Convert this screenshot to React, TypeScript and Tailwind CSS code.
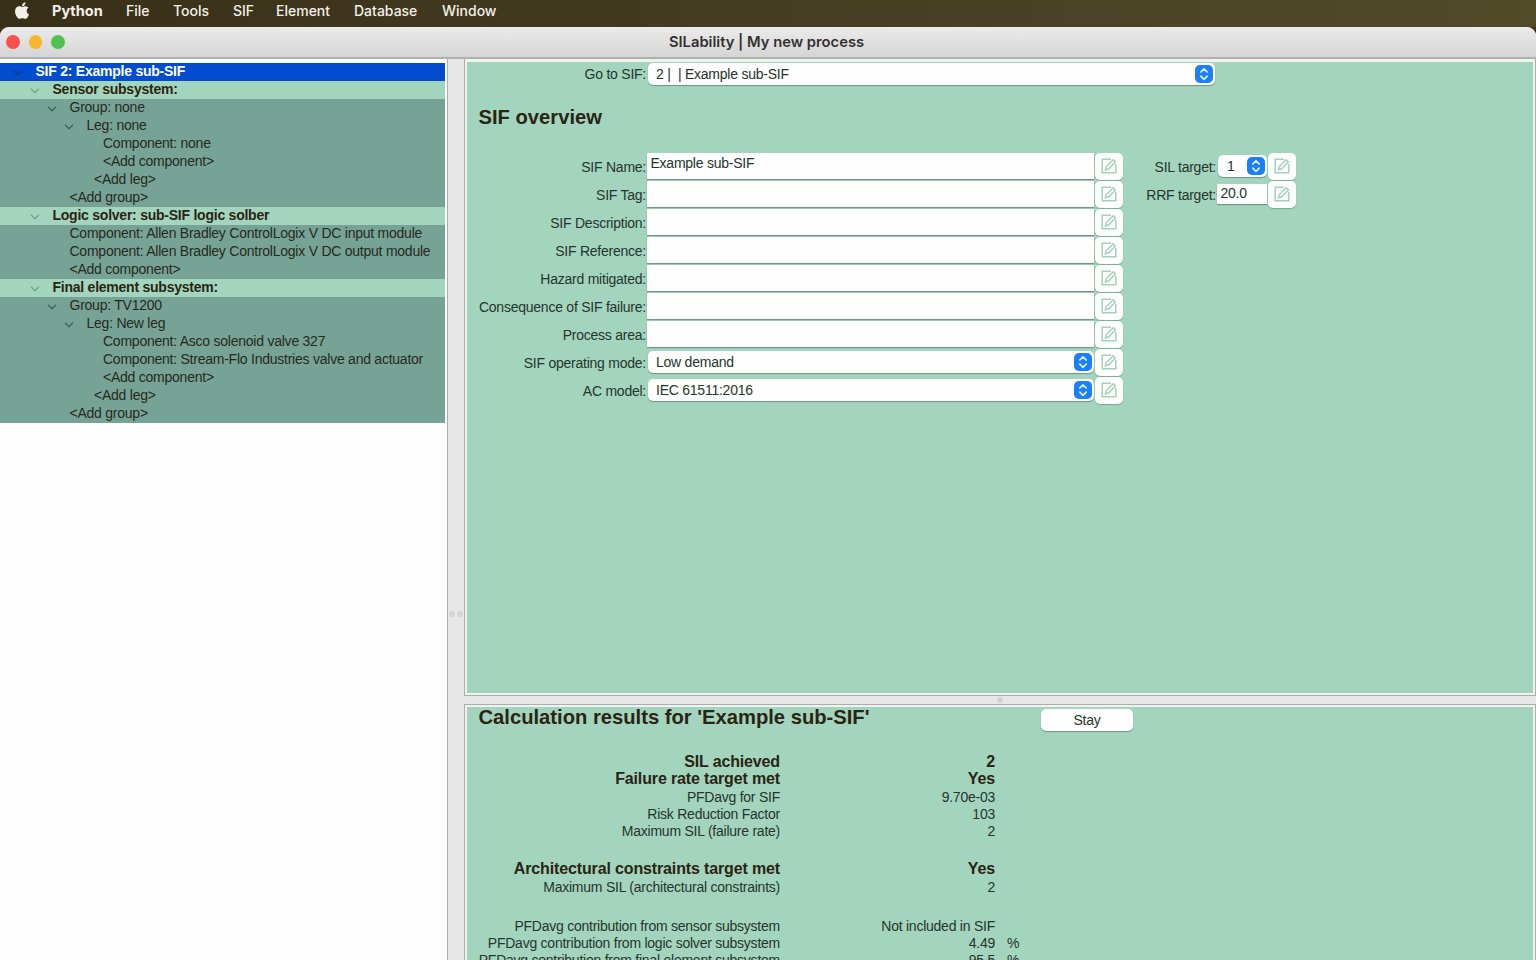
import { FaApple } from "react-icons/fa";

const menus = [
  { label: "File", width: "w-[47px]" },
  { label: "Tools", width: "w-[60px]" },
  { label: "SIF", width: "w-[43px]" },
  { label: "Element", width: "w-[78px]" },
  { label: "Database", width: "w-[88px]" },
  { label: "Window", width: "w-[60px]" },
];

interface TreeRow {
  text: string;
  indent: string;
  kind?: "root" | "section";
  open?: boolean;
}

const tree: TreeRow[] = [
  { text: "SIF 2: Example sub-SIF", indent: "pl-[35.5px]", kind: "root", open: true },
  { text: "Sensor subsystem:", indent: "pl-[52.5px]", kind: "section", open: true },
  { text: "Group: none", indent: "pl-[69.5px]", open: true },
  { text: "Leg: none", indent: "pl-[86.5px]", open: true },
  { text: "Component: none", indent: "pl-[103px]" },
  { text: "<Add component>", indent: "pl-[103px]" },
  { text: "<Add leg>", indent: "pl-[94px]" },
  { text: "<Add group>", indent: "pl-[69.5px]" },
  { text: "Logic solver: sub-SIF logic solber", indent: "pl-[52.5px]", kind: "section", open: true },
  { text: "Component: Allen Bradley ControlLogix V DC input module", indent: "pl-[69.5px]" },
  { text: "Component: Allen Bradley ControlLogix V DC output module", indent: "pl-[69.5px]" },
  { text: "<Add component>", indent: "pl-[69.5px]" },
  { text: "Final element subsystem:", indent: "pl-[52.5px]", kind: "section", open: true },
  { text: "Group: TV1200", indent: "pl-[69.5px]", open: true },
  { text: "Leg: New leg", indent: "pl-[86.5px]", open: true },
  { text: "Component: Asco solenoid valve 327", indent: "pl-[103px]" },
  { text: "Component: Stream-Flo Industries valve and actuator", indent: "pl-[103px]" },
  { text: "<Add component>", indent: "pl-[103px]" },
  { text: "<Add leg>", indent: "pl-[94px]" },
  { text: "<Add group>", indent: "pl-[69.5px]" },
];

const fields = [
  { label: "SIF Name:", value: "Example sub-SIF" },
  { label: "SIF Tag:", value: "" },
  { label: "SIF Description:", value: "" },
  { label: "SIF Reference:", value: "" },
  { label: "Hazard mitigated:", value: "" },
  { label: "Consequence of SIF failure:", value: "" },
  { label: "Process area:", value: "" },
  { label: "SIF operating mode:", value: "Low demand", select: true },
  { label: "AC model:", value: "IEC 61511:2016", select: true },
];

const results = [
  { label: "SIL achieved", value: "2", bold: true },
  { label: "Failure rate target met", value: "Yes", bold: true, gap: "mb-[2px]" },
  { label: "PFDavg for SIF", value: "9.70e-03" },
  { label: "Risk Reduction Factor", value: "103" },
  { label: "Maximum SIL (failure rate)", value: "2", gap: "mb-5" },
  { label: "Architectural constraints target met", value: "Yes", bold: true, gap: "mb-[2px]" },
  { label: "Maximum SIL (architectural constraints)", value: "2", gap: "mb-[22px]" },
  { label: "PFDavg contribution from sensor subsystem", value: "Not included in SIF" },
  { label: "PFDavg contribution from logic solver subsystem", value: "4.49", unit: "%" },
  { label: "PFDavg contribution from final element subsystem", value: "95.5", unit: "%" },
];

function Chevron({ className }: { className: string }) {
  return (
    <svg viewBox="0 0 10 6" className={`w-[10px] h-[6px] -ml-[22.5px] mr-[12.5px] mt-[2px] shrink-0 ${className}`} fill="none" stroke="currentColor" strokeWidth="1.4">
      <path d="M1 0.8 L5 4.8 L9 0.8" />
    </svg>
  );
}

function Stepper() {
  return (
    <span className="w-[18px] h-[18px] rounded-[5px] bg-[#1a7ffa] flex items-center justify-center shrink-0">
      <svg viewBox="0 0 18 18" className="w-[18px] h-[18px]" fill="none" stroke="#e6f3f5" strokeWidth="1.7" strokeLinecap="round" strokeLinejoin="round">
        <path d="M5.8 7 L9 3.9 L12.2 7" />
        <path d="M5.8 11.2 L9 14.3 L12.2 11.2" />
      </svg>
    </span>
  );
}

function EditButton() {
  return (
    <button className="w-[28px] h-[27px] rounded-[5px] bg-[#fcfefc] flex items-center justify-center shrink-0 shadow-[0_1px_1px_rgba(60,90,75,0.35)]" aria-label="Edit">
      <svg viewBox="0 0 16 16" className="w-4 h-4" fill="none" stroke="#a6d0bc" strokeWidth="1.5">
        <path d="M10 1.2 H1.2 V14.8 H14.8 V6" />
        <path d="M4.4 11.8 L5.2 8.8 L12.2 1.8 L14.4 4 L7.4 11 Z" />
      </svg>
    </button>
  );
}

function Select({ value, className }: { value: string; className: string }) {
  return (
    <div className={`h-[22px] rounded-[5px] bg-[#fdfefd] flex items-center justify-between pr-[2px] shadow-[0_1px_1px_rgba(60,90,75,0.5)] ${className}`}>
      <span className="leading-4">{value}</span>
      <Stepper />
    </div>
  );
}

export default function App() {
  return (
    <div className="w-[1536px] h-[960px] overflow-hidden flex flex-col bg-[#3c341c] text-[14px] tracking-[-0.24px] text-[#26352c] font-['Liberation_Sans',Arial,sans-serif] whitespace-pre">
      {/* Menu bar */}
      <div className="h-[27px] shrink-0 flex items-start pt-px bg-linear-to-r from-[#382f18] to-[#524b2a] text-[#f3f1e9] font-['Inter',sans-serif] font-medium text-[14px] leading-5 tracking-normal">
        <FaApple className="w-[18px] h-[19px] ml-[13px] mr-[21px]" />
        <span className="w-[74px] font-bold text-[14.5px]">Python</span>
        {menus.map((m) => (
          <span key={m.label} className={m.width}>{m.label}</span>
        ))}
      </div>

      <div className="flex-1 min-h-0 flex flex-col rounded-t-[9px] overflow-hidden bg-[#e6e6e6]">
        {/* Title bar */}
        <div className="h-[32px] shrink-0 grid grid-cols-[1fr_auto_1fr] items-center bg-linear-to-b from-[#ebebeb] to-[#d5d5d5] border-b-2 border-[#b0b0b0]">
          <div className="flex gap-[9px] pl-[6px]">
            <span className="w-[13.5px] h-[13.5px] rounded-full bg-[#fb4f4b]" />
            <span className="w-[13.5px] h-[13.5px] rounded-full bg-[#fbb52a]" />
            <span className="w-[13.5px] h-[13.5px] rounded-full bg-[#50c152]" />
          </div>
          <h1 className="font-['Inter',sans-serif] font-semibold text-[14.75px] leading-5 tracking-normal text-[#33312f] -ml-[3px] pb-px">SILability | My new process</h1>
        </div>

        <div className="flex-1 min-h-0 flex">
          {/* SIF tree */}
          <div className="w-[448px] shrink-0 bg-[#fdfefd] border-r border-[#adadad] pt-1 pr-[2px]">
            {tree.map((row, i) => (
              <div
                key={i}
                className={`h-[18px] flex items-center leading-[18px] ${row.indent} ${
                  row.kind === "root"
                    ? "bg-[#024ccf] text-white font-bold"
                    : row.kind === "section"
                      ? "bg-[#a3d4be] text-[#2a2412] font-bold"
                      : "bg-[#76a395] text-[#262a1d]"
                }`}
              >
                {row.open && (
                  <Chevron
                    className={row.kind === "root" ? "text-[#0a3a80]" : row.kind === "section" ? "text-[#6fa78e]" : "text-[#3f6556]"}
                  />
                )}
                <span className="-mt-[2px]">{row.text}</span>
              </div>
            ))}
          </div>

          {/* Vertical sash */}
          <div className="w-4 shrink-0 flex items-center justify-center gap-[2px] pt-[209px] bg-[#e7e7e7]">
            <span className="w-[6px] h-[6px] rounded-full bg-[#d3d6d4]" />
            <span className="w-[6px] h-[6px] rounded-full bg-[#d3d6d4]" />
          </div>

          <div className="flex-1 min-w-0 flex flex-col">
            {/* Overview */}
            <div className="h-[637px] shrink-0 border-l border-b border-r border-[#adadad] bg-[#eef3f0] p-[2px] pt-[3px]">
              <div className="h-full bg-[#a3d4be]">
                <div className="flex items-center pt-px">
                  <span className="w-[179px] text-right">Go to SIF:</span>
                  <Select value="2 |  | Example sub-SIF" className="w-[567px] ml-[2px] pl-2" />
                </div>
                <h2 className="mt-[19px] pl-[11.5px] text-[20.2px] leading-[26px] tracking-normal font-bold text-[#2a2412]">SIF overview</h2>
                <div className="mt-[22px] flex">
                  <div>
                    {fields.map((f) => (
                      <div key={f.label} className="h-7 flex items-center">
                        <span className="w-[179px] pt-[2px] text-right">{f.label}</span>
                        {f.select ? (
                          <Select value={f.value} className="w-[446px] ml-[2px] pl-2" />
                        ) : (
                          <div className="w-[447px] h-[26px] ml-px pl-[3.5px] bg-[#fdfefd] leading-[20px] shadow-[0_1px_1px_rgba(60,90,75,0.5)]">{f.value}</div>
                        )}
                        <span className="ml-px">
                          <EditButton />
                        </span>
                      </div>
                    ))}
                  </div>
                  <div className="ml-[22px]">
                    <div className="h-7 flex items-center">
                      <span className="w-[71px] pt-[2px] text-right">SIL target:</span>
                      <Select value="1" className="w-[49px] ml-[2px] mr-px pl-[9px]" />
                      <EditButton />
                    </div>
                    <div className="h-7 flex items-center">
                      <span className="w-[71px] pt-[2px] text-right">RRF target:</span>
                      <div className="w-[50px] h-5 ml-px mr-px pl-[3.5px] bg-[#fdfefd] leading-[18px] shadow-[0_1px_1px_rgba(60,90,75,0.5)]">20.0</div>
                      <EditButton />
                    </div>
                  </div>
                </div>
              </div>
            </div>

            {/* Horizontal sash */}
            <div className="h-2 shrink-0 flex items-center justify-center bg-[#e7e7e7]">
              <span className="w-[6px] h-[6px] rounded-full bg-[#d0d3d1]" />
            </div>

            {/* Results */}
            <div className="flex-1 min-h-0 overflow-hidden border-l border-t border-r border-[#adadad] bg-[#eef3f0] p-[2px] pb-0">
              <div className="h-full overflow-hidden bg-[#a3d4be]">
                <div className="h-[30px] flex items-start pl-[11.5px] pt-px">
                  <h2 className="w-[562.5px] -mt-[2px] text-[20.2px] leading-[22px] tracking-normal font-bold text-[#2a2412]">Calculation results for 'Example sub-SIF'</h2>
                  <button className="w-[92px] h-[22px] mt-px rounded-[5px] bg-[#fdfefd] shadow-[0_1px_1px_rgba(60,90,75,0.5)]">Stay</button>
                </div>
                <div className="pt-[16px]">
                  {results.map((r) => (
                    <div key={r.label} className={`h-[17px] leading-[17px] flex ${r.bold ? "font-bold text-[16px] tracking-[-0.14px] text-[#2a2412]" : ""} ${r.gap ?? ""}`}>
                      <span className="w-[313px] flex justify-end">{r.label}</span>
                      <span className="w-[215px] text-right">{r.value}</span>
                      <span className="ml-3">{r.unit}</span>
                    </div>
                  ))}
                </div>
              </div>
            </div>
          </div>
        </div>
      </div>
    </div>
  );
}
